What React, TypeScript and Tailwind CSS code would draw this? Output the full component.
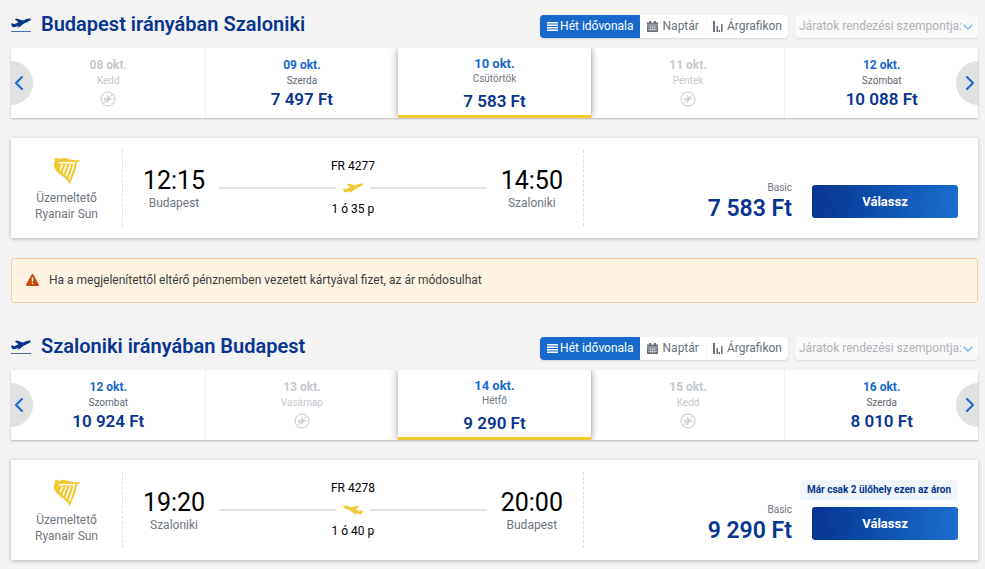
import { ChevronDown, ChevronLeft, ChevronRight } from "lucide-react";

type Day = {
  date: string;
  weekday: string;
  price?: string;
  selected?: boolean;
};

type Flight = {
  id: string;
  title: string;
  days: Day[];
  number: string;
  duration: string;
  from: string;
  departs: string;
  to: string;
  arrives: string;
  price: string;
  returning?: boolean;
  seatsLeft?: string;
};

const flights: Flight[] = [
  {
    id: "out",
    title: "Budapest irányában Szaloniki",
    days: [
      { date: "08 okt.", weekday: "Kedd" },
      { date: "09 okt.", weekday: "Szerda", price: "7 497 Ft" },
      { date: "10 okt.", weekday: "Csütörtök", price: "7 583 Ft", selected: true },
      { date: "11 okt.", weekday: "Péntek" },
      { date: "12 okt.", weekday: "Szombat", price: "10 088 Ft" },
    ],
    number: "FR 4277",
    duration: "1 ó 35 p",
    from: "Budapest",
    departs: "12:15",
    to: "Szaloniki",
    arrives: "14:50",
    price: "7 583 Ft",
  },
  {
    id: "back",
    title: "Szaloniki irányában Budapest",
    days: [
      { date: "12 okt.", weekday: "Szombat", price: "10 924 Ft" },
      { date: "13 okt.", weekday: "Vasárnap" },
      { date: "14 okt.", weekday: "Hétfő", price: "9 290 Ft", selected: true },
      { date: "15 okt.", weekday: "Kedd" },
      { date: "16 okt.", weekday: "Szerda", price: "8 010 Ft" },
    ],
    number: "FR 4278",
    duration: "1 ó 40 p",
    from: "Szaloniki",
    departs: "19:20",
    to: "Budapest",
    arrives: "20:00",
    price: "9 290 Ft",
    returning: true,
    seatsLeft: "Már csak 2 ülőhely ezen az áron",
  },
];

function Plane({ className }: { className?: string }) {
  return (
    <svg viewBox="0 0 20 10" className={className} fill="currentColor" aria-hidden="true">
      <path d="M0 5.700 1.400 5.300 3.200 6.200 7.500 4.200 3.800 1.300 5.600.5 11.800 2.600 15.500 1C17.500.2 19.500.3 19.800 1.300 20 2.200 18.500 3 17 3.700L13 5.600 8.500 9 6.300 9.800 7.600 7.800C6 8.500 4 9.200 2.600 9.200 1.200 9.200.9 8.200.5 7.200Z" />
    </svg>
  );
}

function NoFlight() {
  return (
    <svg viewBox="0 0 16 16" className="h-4 w-4" fill="none" stroke="currentColor" aria-label="Nincs járat">
      <circle cx="8" cy="8" r="7" />
      <path d="M3.200 12.800 12.800 3.200" />
      <path
        fill="currentColor"
        stroke="none"
        d="M12.400 7.500c.6 0 .6 1 0 1H9.600l-2 3.300h-.9l.9-3.300H5.400l-.8 1h-.7l.4-1.500-.4-1.500h.7l.8 1h2.200l-.9-3.300h.9l2 3.300z"
      />
    </svg>
  );
}

function Harp() {
  return (
    <svg viewBox="0 0 28 28" className="h-7 w-7" aria-hidden="true">
      <path
        fill="#f1c933"
        d="M2.200 1C3.800.2 5.600.8 5.800 2.200 9 .6 12 .8 15 1.700 19 3 22.500 3.500 27.600 3 26.500 4.600 25 5.200 23.800 5.600 23.400 12 20.500 19 16.500 27.500 15.500 23.500 12 21 8 18 3.500 14.500.3 10.500.8 6.200L2.200 4.800C1.200 3.500 1.200 1.800 2.200 1z"
      />
      <path
        fill="none"
        stroke="#fff"
        strokeWidth="1.500"
        d="M6 6.300C9.500 4.700 14 6.300 22 5.500M9.800 7.500C8.800 9.500 7.500 11 7.300 13.500M13.600 7.500C12.300 10.500 10.800 13 10.300 16.500M17.300 7.500C16.500 11.500 14 15.500 13.200 19.300M20.900 6.500C20.500 12 17.800 17 16.200 22"
      />
    </svg>
  );
}

function ListIcon() {
  return (
    <svg viewBox="0 0 11 9" className="h-[9px] w-[11px]" fill="currentColor" aria-hidden="true">
      <path d="M0 0h11v1.500H0zM0 2.500h11V4H0zM0 5h11v1.500H0zM0 7.500h11V9H0z" />
    </svg>
  );
}

function CalendarIcon() {
  return (
    <svg viewBox="0 0 11 11" className="h-[11px] w-[11px]" aria-hidden="true">
      <path fill="currentColor" d="M0 1.500h2V0h2v1.500h3V0h2v1.500h2V11H0z" />
      <path stroke="#fff" strokeWidth=".5" d="M0 4h11M1 6.200h9M1 8.500h9M3.300 4.500v5.500M5.500 4.500v5.500M7.700 4.500v5.500" />
    </svg>
  );
}

function ChartIcon() {
  return (
    <svg viewBox="0 0 10 11" className="h-[11px] w-[10px]" fill="currentColor" aria-hidden="true">
      <path d="M0 0h2v11H0zM3.500 5H5v6H3.500zM5.500 9H7v2H5.500zM8 3h1.500v8H8z" />
    </svg>
  );
}

function Toolbar({ id }: { id: string }) {
  return (
    <div className="flex items-center gap-[7px] text-[12px] leading-[23px] text-[#6a717c]">
      <div className="flex rounded-sm bg-white shadow-[0_1px_2px_rgba(0,0,0,0.12)]">
        <button className="flex items-center gap-[2px] rounded-l-sm bg-[#1769cc] pr-[6px] pl-[7px] text-white">
          <ListIcon />
          Hét idővonala
        </button>
        <button className="flex items-center gap-[5px] border-r border-[#f8f8f8] px-[7px]">
          <CalendarIcon />
          Naptár
        </button>
        <button className="flex items-center gap-1 px-[6px]">
          <ChartIcon />
          Árgrafikon
        </button>
      </div>
      <div className="relative w-[183px] rounded-sm bg-[#f9f9f9] text-[#b0b3b8] shadow-[0_1px_2px_rgba(0,0,0,0.1)]">
        <select
          id={"sort-" + id}
          disabled
          aria-label="Járatok rendezési szempontja"
          className="block h-[23px] w-full appearance-none pl-1 opacity-100"
        >
          <option>Járatok rendezési szempontja:</option>
        </select>
        <ChevronDown
          className="pointer-events-none absolute top-1 right-[2px] h-4 w-4 text-[#7fb2e6]"
          strokeWidth={2}
        />
      </div>
    </div>
  );
}

function DayCell({ day }: { day: Day }) {
  if (day.selected) {
    return (
      <button className="relative flex h-[70px] flex-1 flex-col items-center border-b-3 border-[#f1c933] bg-white pt-2 shadow-[0_0_8px_rgba(0,0,0,0.4)]">
        <span className="text-[13px] leading-4 font-bold text-[#1769cc]">{day.date}</span>
        <span className="text-[10px] leading-[14px] text-[#6f7680]">{day.weekday}</span>
        <span className="mt-[5px] text-[17px] leading-5 font-semibold text-[#073590]">{day.price}</span>
      </button>
    );
  }

  return (
    <button
      disabled={!day.price}
      className="flex h-[70px] flex-1 flex-col items-center border-l border-[#f1f1f1] pt-[9px] text-[#c5c8cc] first:border-white"
    >
      <span className={"text-[12px] leading-4 font-bold" + (day.price ? " text-[#1769cc]" : "")}>{day.date}</span>
      <span className={"text-[10px] leading-4" + (day.price ? " text-[#5f6773]" : "")}>{day.weekday}</span>
      {day.price ? (
        <span className="text-[17px] leading-5 font-semibold text-[#073590]">{day.price}</span>
      ) : (
        <span className="mt-[2px]">
          <NoFlight />
        </span>
      )}
    </button>
  );
}

function DayStrip({ days }: { days: Day[] }) {
  return (
    <div className="relative bg-white shadow-[0_1px_2px_rgba(0,0,0,0.25)]">
      <div className="flex overflow-hidden">
        {days.map((day) => (
          <DayCell key={day.date} day={day} />
        ))}
      </div>
      <button
        aria-label="Előző napok"
        className="absolute top-[13px] left-0 flex h-11 w-[22px] items-center rounded-r-full bg-[#dfe1e3] text-[#1769cc]"
      >
        <ChevronLeft className="-ml-1 h-6 w-6 shrink-0" strokeWidth={2} />
      </button>
      <button
        aria-label="Következő napok"
        className="absolute top-[13px] right-0 flex h-11 w-[22px] items-center justify-end rounded-l-full bg-[#dfe1e3] text-[#1769cc]"
      >
        <ChevronRight className="-mr-1 h-6 w-6 shrink-0" strokeWidth={2} />
      </button>
    </div>
  );
}

function Stop({ time, city, className }: { time: string; city: string; className: string }) {
  return (
    <div className={"flex w-[62px] flex-col items-center pt-[2px] " + className}>
      <span className="text-[25px] leading-7 text-black">{time}</span>
      <span className="text-[12px] leading-4 text-[#6f7680]">{city}</span>
    </div>
  );
}

function FlightCard({ flight }: { flight: Flight }) {
  return (
    <article className="flex bg-white py-3 shadow-[0_1px_4px_rgba(0,0,0,0.25)]">
      <div className="flex w-28 flex-col items-center border-r border-dashed border-[#dcdee0] pt-[7px] pb-1 text-center text-[12px] leading-4 text-[#6f7680]">
        <Harp />
        <span className="mt-[5px]">Üzemeltető</span>
        <span>Ryanair Sun</span>
      </div>

      <div className="flex flex-[7] items-center border-r border-dashed border-[#dcdee0]">
        <Stop time={flight.departs} city={flight.from} className="ml-5" />
        <div className="mx-[14px] flex flex-1 flex-col items-center pb-px text-[12px] leading-4 text-black">
          <span>{flight.number}</span>
          <div className="mt-1 mb-[3px] flex h-5 w-full items-center gap-[7px]">
            <span className="h-[2px] flex-1 bg-[#e1e3e5]" />
            <Plane className={"h-[10px] w-5 text-[#f1c933]" + (flight.returning ? " -scale-x-100" : "")} />
            <span className="h-[2px] flex-1 bg-[#e1e3e5]" />
          </div>
          <span>{flight.duration}</span>
        </div>
        <Stop time={flight.arrives} city={flight.to} className="mr-5" />
      </div>

      <div className="flex flex-[6] items-end justify-end gap-5 pb-[2px]">
        <div className="flex flex-col items-end">
          <span className="text-[10px] leading-3 text-[#6f7680]">Basic</span>
          <span className="text-[23px] leading-[30px] font-semibold text-[#073590]">{flight.price}</span>
        </div>
        <div className="relative mr-5 mb-[6px] w-[146px]">
          {flight.seatsLeft && (
            <span className="absolute right-0 bottom-10 rounded-[3px] bg-[#f1f6fb] px-[7px] text-[10px] leading-5 font-bold whitespace-nowrap text-[#073590]">
              {flight.seatsLeft}
            </span>
          )}
          <button className="block h-[33px] w-full rounded-[3px] bg-linear-100 from-[#073590] to-[#1a6fcf] text-[13px] font-bold text-white">
            Válassz
          </button>
        </div>
      </div>
    </article>
  );
}

function CurrencyNotice() {
  return (
    <div
      role="note"
      className="mt-5 mb-[19px] flex h-[45px] items-center gap-[10px] rounded-[3px] border border-[#f3cba8] bg-[#fff4e3] px-[14px] pb-[2px] text-[12px] text-[#3d3d3d]"
    >
      <svg viewBox="0 0 13 12" className="h-3 w-[13px]" aria-hidden="true">
        <path fill="#c54a09" d="M5.600.6c.4-.7 1.400-.7 1.800 0l5.400 9.900c.4.700-.1 1.500-.8 1.500H1c-.7 0-1.200-.8-.8-1.500z" />
        <path stroke="#fff" strokeWidth="1.400" d="M6.500 3.500v4M6.500 8.700v1.400" />
      </svg>
      <p>Ha a megjelenítettől eltérő pénznemben vezetett kártyával fizet, az ár módosulhat</p>
    </div>
  );
}

function FlightSection({ flight }: { flight: Flight }) {
  return (
    <section>
      <header className="flex h-12 items-center justify-between pt-[5px]">
        <h2 className="flex items-center gap-[10px] pb-[5px] text-[20px] leading-6 font-semibold text-[#073590]">
          <span className="mt-[2px] w-5 border-b border-[#4a6cb0] pb-[3px]">
            <Plane className="h-[10px] w-5" />
          </span>
          {flight.title}
        </h2>
        <Toolbar id={flight.id} />
      </header>
      <DayStrip days={flight.days} />
      <div className="mt-5">
        <FlightCard flight={flight} />
      </div>
    </section>
  );
}

export default function App() {
  return (
    <main className="min-h-screen bg-[#f3f3f3] pr-[7px] pb-[9px] pl-[11px] font-[Roboto,'Liberation_Sans',sans-serif]">
      <FlightSection flight={flights[0]} />
      <CurrencyNotice />
      <FlightSection flight={flights[1]} />
    </main>
  );
}
